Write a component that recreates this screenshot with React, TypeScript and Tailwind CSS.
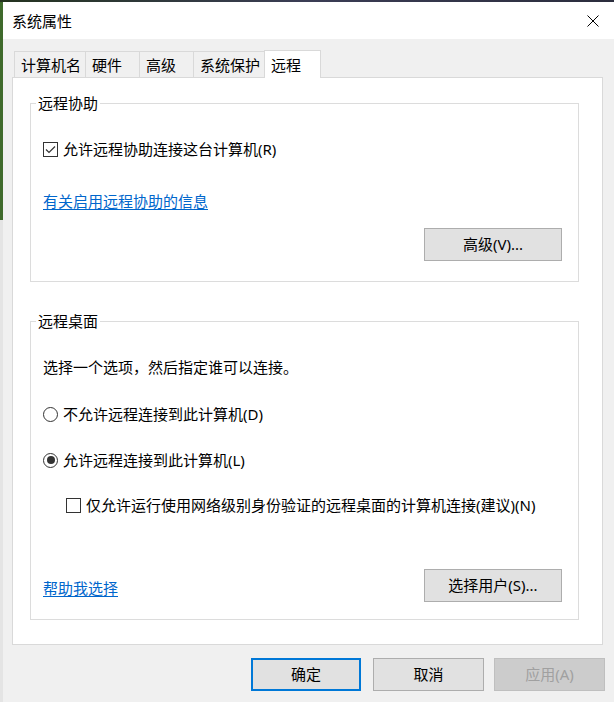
import { useState } from "react"

const font = { fontFamily: '"Noto Sans", "Noto Sans CJK SC", sans-serif' }

function CheckBox({ checked, onClick }: { checked: boolean; onClick: () => void }) {
   return (
      <button
         type="button"
         onClick={onClick}
         className="w-[15px] h-[15px] border border-[#333333] bg-white flex items-center justify-center shrink-0"
      >
         {checked && (
            <svg width="13" height="13" viewBox="0 0 13 13">
               <path d="M2 6.5 L5 9.5 L11 3.5" fill="none" stroke="#333333" strokeWidth="1.2" />
            </svg>
         )}
      </button>
   )
}

function Radio({ checked, onClick }: { checked: boolean; onClick: () => void }) {
   return (
      <button
         type="button"
         onClick={onClick}
         className="w-[15px] h-[15px] rounded-full border border-[#333333] bg-white flex items-center justify-center shrink-0"
      >
         {checked && <span className="w-[8px] h-[8px] rounded-full bg-[#333333]" />}
      </button>
   )
}

export default function App() {
   const [tab, setTab] = useState("远程")
   const [allowAssist, setAllowAssist] = useState(true)
   const [remote, setRemote] = useState<"deny" | "allow">("allow")
   const [nla, setNla] = useState(false)

   const tabs = [
      { name: "计算机名", w: "w-[71px]" },
      { name: "硬件", w: "w-[54px]" },
      { name: "高级", w: "w-[54px]" },
      { name: "系统保护", w: "w-[71px]" },
      { name: "远程", w: "w-[57px]" },
   ]

   return (
      <div className="w-[614px] h-[702px] flex flex-col overflow-hidden text-[15px] text-black" style={font}>
         {/* wallpaper peeking through at the edges */}
         <div className="h-[2px] bg-linear-to-r from-[#24331f] via-[#3b3d55] to-[#2b2d3d]" />
         <div className="flex flex-1">
            <div className="w-[3px] flex flex-col">
               <div className="h-[218px] bg-[#3f6a2c]" />
               <div className="flex-1 bg-[#e4e4e4]" />
            </div>

            <div className="flex-1 flex flex-col bg-[#f0f0f0]">
               <div className="h-[37px] bg-white flex items-center justify-between pl-[9px]">
                  <span className="leading-[20px]">系统属性</span>
                  <svg width="12" height="12" viewBox="0 0 12 12" className="mr-[15px]">
                     <path d="M0.5 0.5 L11.5 11.5 M11.5 0.5 L0.5 11.5" stroke="#000" strokeWidth="1" />
                  </svg>
               </div>

               <div className="pt-[10px] flex h-[38px] items-end ml-[11px]">
                  {tabs.map((t) =>
                     t.name === tab ? (
                        <button
                           key={t.name}
                           onClick={() => setTab(t.name)}
                           className={`relative z-10 -mb-px ${t.w} h-[28px] bg-white border border-b-0 border-[#d9d9d9] text-left pl-[6px] leading-[22px]`}
                        >
                           {t.name}
                        </button>
                     ) : (
                        <button
                           key={t.name}
                           onClick={() => setTab(t.name)}
                           className={`${t.w} h-[26px] bg-[#f0f0f0] border border-b-0 border-r-0 border-[#d9d9d9] text-left pl-[6px] leading-[24px]`}
                        >
                           {t.name}
                        </button>
                     )
                  )}
               </div>

               <div className="ml-[9px] w-[591px] h-[568px] bg-white border border-[#d9d9d9] px-[17px] flex flex-col">
                  <fieldset className="mt-[15px] w-[549px] h-[189px] border border-[#dcdcdc]">
                     <legend className="ml-[5px] px-[2px] leading-[20px]">远程协助</legend>
                     <div className="pl-[12px] flex flex-col">
                        <label className="mt-[26px] h-[20px] flex items-center gap-[5px]">
                           <CheckBox checked={allowAssist} onClick={() => setAllowAssist(!allowAssist)} />
                           <span className="leading-[20px]">允许远程协助连接这台计算机(R)</span>
                        </label>
                        <a className="mt-[32px] h-[20px] leading-[20px] text-[#0066cc] underline underline-offset-2 self-start cursor-pointer">
                           有关启用远程协助的信息
                        </a>
                        <div className="mt-[17px] flex justify-end pr-[16px]">
                           <button className="w-[138px] h-[33px] bg-[#e1e1e1] border border-[#adadad]">高级(V)...</button>
                        </div>
                     </div>
                  </fieldset>

                  <fieldset className="mt-[29px] w-[549px] h-[309px] border border-[#dcdcdc]">
                     <legend className="ml-[5px] px-[2px] leading-[20px]">远程桌面</legend>
                     <div className="pl-[12px] flex flex-col">
                        <p className="mt-[26px] h-[20px] leading-[20px]">选择一个选项，然后指定谁可以连接。</p>
                        <label className="mt-[27px] h-[20px] flex items-center gap-[5px]">
                           <Radio checked={remote === "deny"} onClick={() => setRemote("deny")} />
                           <span className="leading-[20px]">不允许远程连接到此计算机(D)</span>
                        </label>
                        <label className="mt-[26px] h-[20px] flex items-center gap-[5px]">
                           <Radio checked={remote === "allow"} onClick={() => setRemote("allow")} />
                           <span className="leading-[20px]">允许远程连接到此计算机(L)</span>
                        </label>
                        <label className="mt-[25px] h-[20px] flex items-center gap-[5px] pl-[23px]">
                           <CheckBox checked={nla} onClick={() => setNla(!nla)} />
                           <span className="leading-[20px]">仅允许运行使用网络级别身份验证的远程桌面的计算机连接(建议)(N)</span>
                        </label>
                        <div className="mt-[54px] flex items-center justify-between pr-[16px]">
                           <a className="mt-[5px] leading-[20px] text-[#0066cc] underline underline-offset-2 cursor-pointer">帮助我选择</a>
                           <button className="w-[138px] h-[33px] bg-[#e1e1e1] border border-[#adadad]">选择用户(S)...</button>
                        </div>
                     </div>
                  </fieldset>
               </div>

               <div className="mt-[13px] flex justify-end pr-[9px]">
                  <button className="w-[110px] h-[33px] bg-[#e1e1e1] border-2 border-[#0078d7]">确定</button>
                  <button className="ml-[12px] w-[111px] h-[33px] bg-[#e1e1e1] border border-[#adadad]">取消</button>
                  <button disabled className="ml-[10px] w-[111px] h-[33px] bg-[#cccccc] border border-[#bfbfbf] text-[#a0a0a0]">
                     应用(A)
                  </button>
               </div>
            </div>
         </div>
      </div>
   )
}
